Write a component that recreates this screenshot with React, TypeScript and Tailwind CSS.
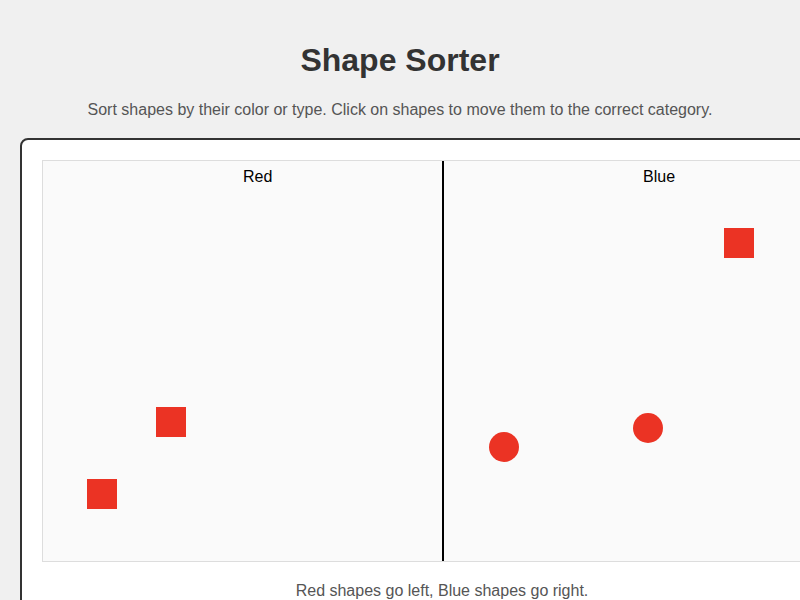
import React from "react";

type Shape = { kind: "square" | "circle"; x: number; y: number };

const shapes: Shape[] = [
  { kind: "square", x: 113, y: 246 },
  { kind: "square", x: 44, y: 318 },
  { kind: "square", x: 681, y: 67 },
  { kind: "circle", x: 446, y: 271 },
  { kind: "circle", x: 590, y: 252 },
];

const App = () => {
  return (
    <div className="min-h-screen bg-[#f0f0f0] p-5 font-['Liberation_Sans',Arial,sans-serif] overflow-hidden">
      <h1 className="text-center text-[32px] font-bold leading-[37px] text-[#333] mt-[22px]">
        Shape Sorter
      </h1>
      <p className="text-center text-base leading-[18px] text-[#555] mt-[22px]">
        Sort shapes by their color or type. Click on shapes to move them to the correct category.
      </p>
      <div className="mt-[19px] w-[844px] shrink-0 rounded-lg border-2 border-[#333] bg-white p-5">
        <div className="relative h-[402px] w-[802px] border border-[#ddd] bg-[#fafafa]">
          <span className="absolute left-[200px] top-[7px] text-base leading-[18px] text-black">Red</span>
          <span className="absolute left-[600px] top-[7px] text-base leading-[18px] text-black">Blue</span>
          <div className="absolute left-[399px] top-0 h-full w-[2px] bg-black" />
          {shapes.map((s, i) => (
            <div
              key={i}
              className={`absolute h-[30px] w-[30px] bg-[#eb3324] ${s.kind === "circle" ? "rounded-full" : ""}`}
              style={{ left: s.x, top: s.y }}
            />
          ))}
        </div>
        <p className="mt-[20px] text-center text-base leading-[18px] text-[#555]">
          Red shapes go left, Blue shapes go right.
        </p>
      </div>
    </div>
  );
};

export default App;
